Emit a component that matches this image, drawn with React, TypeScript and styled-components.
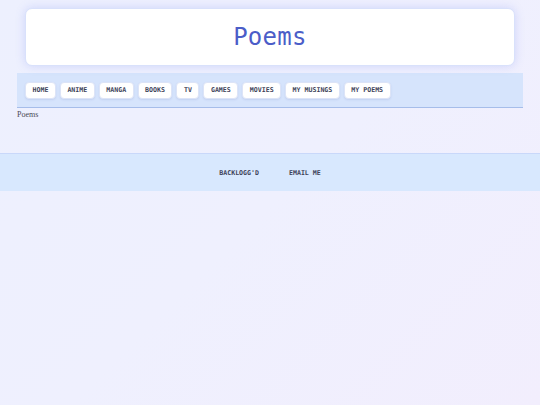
import styled, { createGlobalStyle } from "styled-components"

const links = ["Home", "Anime", "Manga", "Books", "TV", "Games", "Movies", "My Musings", "My Poems"]

const GlobalStyle = createGlobalStyle`
    html, body {
        margin: 0;
        min-height: 100%;
    }
    body {
        min-height: 405px;
        background: linear-gradient(135deg, #edf0fe 0%, #eff0fe 50%, #f2eefd 100%);
        font-family: "Liberation Serif", serif;
    }
`

export default function App() {
    return (
        <>
            <GlobalStyle />
            <Page>
                <Header>
                    <Title>Poems</Title>
                </Header>
                <Nav>
                    {links.map((l) => (
                        <NavButton key={l}>{l}</NavButton>
                    ))}
                </Nav>
                <Crumb>Poems</Crumb>
            </Page>
            <Footer>
                <FooterLink>Backlogg'd</FooterLink>
                <FooterLink>Email me</FooterLink>
            </Footer>
        </>
    )
}

const Page = styled.div`
    padding: 0 17px;
    min-height: 153px;
    box-sizing: border-box;
`

const Header = styled.header`
    margin: 0 8px 15px;
    position: relative;
    top: 8px;
    height: 58px;
    background: #ffffff;
    border: 1px solid #d9e1fb;
    border-radius: 7px;
    box-shadow: 0 0 10px rgba(110, 130, 240, 0.25);
    display: flex;
    align-items: center;
    justify-content: center;
    box-sizing: border-box;
`

const Title = styled.h1`
    margin: 0;
    font-family: "DejaVu Sans Mono", monospace;
    font-weight: 400;
    font-size: 24px;
    color: #4b5dc8;
    letter-spacing: 0.3px;
`

const Nav = styled.nav`
    height: 35px;
    box-sizing: border-box;
    background: #d6e4fc;
    border-bottom: 1px solid #a6bdea;
    display: flex;
    align-items: center;
    gap: 4px;
    padding: 0 8px;
`

const NavButton = styled.a`
    display: inline-flex;
    align-items: center;
    height: 17px;
    padding: 0 6.5px;
    background: #ffffff;
    border: 1px solid #dde4f7;
    border-radius: 4px;
    box-shadow: 0 1px 2px rgba(90, 110, 180, 0.15);
    font-family: "DejaVu Sans Mono", monospace;
    font-weight: 700;
    font-size: 6.6px;
    text-transform: uppercase;
    color: #3d4258;
    box-sizing: border-box;
    cursor: pointer;
`

const Crumb = styled.div`
    font-size: 8px;
    color: #4a4a55;
    margin-top: 2px;
`

const Footer = styled.footer`
    height: 38px;
    box-sizing: border-box;
    background: #d8e8fe;
    border-top: 1px solid #c9d8fa;
    display: flex;
    align-items: center;
    justify-content: center;
    gap: 30px;
`

const FooterLink = styled.a`
    font-family: "DejaVu Sans Mono", monospace;
    font-weight: 700;
    font-size: 6.6px;
    text-transform: uppercase;
    color: #3d4258;
    cursor: pointer;
`
